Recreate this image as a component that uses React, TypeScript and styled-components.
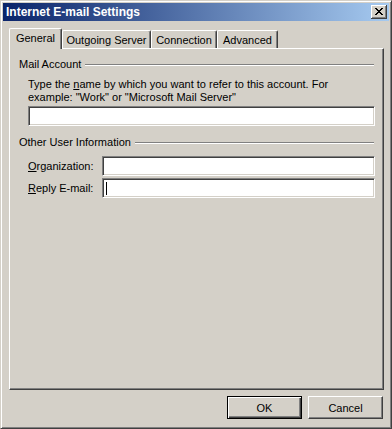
import styled, { createGlobalStyle } from "styled-components"

const GlobalStyle = createGlobalStyle`
html, body {
  margin: 0;
  padding: 0;
  background: #D4D0C8;
}
body {
  font-family: 'Liberation Sans', Arial, sans-serif;
  font-size: 11px;
  color: #000;
}
`

const Window = styled.div`
box-sizing: border-box;
width: 392px;
height: 429px;
background: #D4D0C8;
border: 1px solid;
border-color: #D4D0C8 #404040 #404040 #D4D0C8;
box-shadow: inset 1px 1px #fff, inset -1px -1px #808080;
padding: 2px;
display: flex;
flex-direction: column;
`

const TitleBar = styled.div`
height: 18px;
display: flex;
align-items: center;
justify-content: space-between;
background: linear-gradient(to right, #0A246A, #A6CAF0);
padding: 0 2px 0 3px;
`

const TitleText = styled.span`
color: #fff;
font-weight: 700;
font-size: 12px;
line-height: 18px;
white-space: nowrap;
`

const CloseButton = styled.div`
box-sizing: border-box;
width: 16px;
height: 14px;
background: #D4D0C8;
box-shadow: inset -1px -1px #404040, inset 1px 1px #fff, inset -2px -2px #808080;
display: flex;
align-items: center;
justify-content: center;
padding: 0 1px 1px 0;
`

const Body = styled.div`
flex: 1;
display: flex;
flex-direction: column;
padding: 7px 5px 7px 6px;
`

const TabRow = styled.div`
display: flex;
align-items: flex-end;
height: 20px;
`

const Tab = styled.div<{ $w: number; $active?: boolean }>`
box-sizing: border-box;
position: relative;
z-index: ${p => (p.$active ? 1 : 0)};
width: ${p => p.$w}px;
height: ${p => (p.$active ? 21 : 18)}px;
margin-bottom: ${p => (p.$active ? -1 : 0)}px;
background: #D4D0C8;
border-top: 1px solid #fff;
border-left: 1px solid #fff;
border-right: 1px solid #404040;
border-radius: 2px 2px 0 0;
box-shadow: inset -1px 0 #808080;
display: flex;
justify-content: center;
padding-top: 3px;
white-space: nowrap;
`

const Panel = styled.div`
box-sizing: border-box;
height: 342px;
width: 375px;
background: #D4D0C8;
border-top: 1px solid #fff;
border-left: 1px solid #fff;
border-right: 1px solid #404040;
border-bottom: 1px solid #404040;
box-shadow: inset -1px -1px #808080;
padding: 9px 8px 0 9px;
display: flex;
flex-direction: column;
`

const GroupHeader = styled.div<{ $top?: number }>`
display: flex;
align-items: center;
gap: 4px;
line-height: 13px;
margin-top: ${p => p.$top ?? 0}px;
margin-right: 1px;
`

const GroupLine = styled.div`
flex: 1;
height: 0;
border-top: 1px solid #808080;
border-bottom: 1px solid #fff;
margin-top: 1px;
`

const Indent = styled.div`
padding-left: 9px;
display: flex;
flex-direction: column;
`

const Description = styled.p`
margin: 7px 0 2px;
line-height: 13px;
white-space: nowrap;
`

const Field = styled.div`
box-sizing: border-box;
height: 20px;
flex: 1 0 auto;
background: #fff;
border-top: 1px solid #808080;
border-left: 1px solid #808080;
border-right: 1px solid #fff;
border-bottom: 1px solid #fff;
box-shadow: inset 1px 1px #404040, inset -1px -1px #D4D0C8;
display: flex;
align-items: center;
padding-left: 3px;
`

const Caret = styled.span`
width: 1px;
height: 13px;
background: #000;
`

const FieldList = styled.div`
display: flex;
flex-direction: column;
gap: 2px;
margin-top: 7px;
`

const FieldRow = styled.div`
display: flex;
align-items: center;
`

const Label = styled.label`
width: 74px;
flex: none;
line-height: 13px;
`

const ButtonRow = styled.div`
display: flex;
justify-content: flex-end;
gap: 6px;
margin-top: 6px;
margin-right: 1px;
`

const Button = styled.div<{ $default?: boolean }>`
box-sizing: border-box;
width: 75px;
height: 23px;
background: #D4D0C8;
display: flex;
align-items: center;
justify-content: center;
border: 1px solid;
border-color: ${p => (p.$default ? "#000" : "#fff #404040 #404040 #fff")};
box-shadow: ${p =>
  p.$default
    ? "inset 1px 1px #fff, inset -1px -1px #404040, inset -2px -2px #808080"
    : "inset -1px -1px #808080"};
`

const CloseIcon = () => (
  <svg width="8" height="7" viewBox="0 0 8 7" shapeRendering="crispEdges">
    <path
      d="M0 0h2v1h-2zM6 0h2v1h-2zM1 1h2v1h-2zM5 1h2v1h-2zM2 2h4v1h-4zM3 3h2v1h-2zM2 4h4v1h-4zM1 5h2v1h-2zM5 5h2v1h-2zM0 6h2v1h-2zM6 6h2v1h-2z"
      fill="#000"
    />
  </svg>
)

const App = () => {
  return (
    <>
      <GlobalStyle />
      <Window>
        <TitleBar>
          <TitleText>Internet E-mail Settings</TitleText>
          <CloseButton>
            <CloseIcon />
          </CloseButton>
        </TitleBar>
        <Body>
          <TabRow>
            <Tab $w={53} $active>General</Tab>
            <Tab $w={89}>Outgoing Server</Tab>
            <Tab $w={66}>Connection</Tab>
            <Tab $w={61}>Advanced</Tab>
          </TabRow>
          <Panel>
            <GroupHeader>
              Mail Account
              <GroupLine />
            </GroupHeader>
            <Indent>
              <Description>
                Type the <u>n</u>ame by which you want to refer to this account. For
                <br />
                example: "Work" or "Microsoft Mail Server"
              </Description>
              <Field />
            </Indent>
            <GroupHeader $top={10}>
              Other User Information
              <GroupLine />
            </GroupHeader>
            <Indent>
              <FieldList>
                <FieldRow>
                  <Label><u>O</u>rganization:</Label>
                  <Field />
                </FieldRow>
                <FieldRow>
                  <Label><u>R</u>eply E-mail:</Label>
                  <Field>
                    <Caret />
                  </Field>
                </FieldRow>
              </FieldList>
            </Indent>
          </Panel>
          <ButtonRow>
            <Button $default>OK</Button>
            <Button>Cancel</Button>
          </ButtonRow>
        </Body>
      </Window>
    </>
  )
}

export default App
